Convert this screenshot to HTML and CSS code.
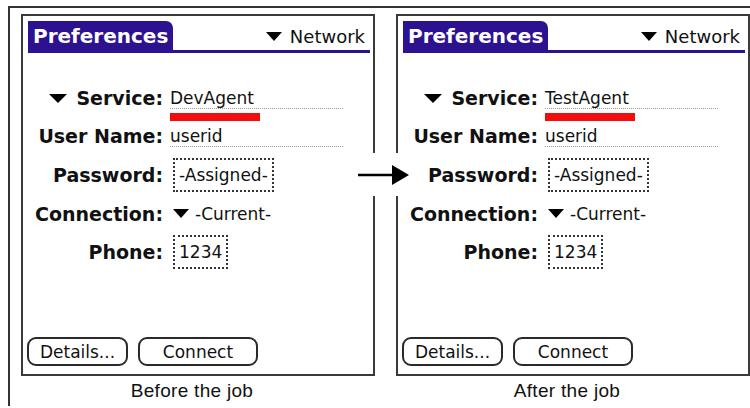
FILE: index.html
```html
<!DOCTYPE html>
<html lang="en">
<head>
    <meta charset="UTF-8">
    <title>Network preferences</title>
    <link rel="stylesheet" href="styles.css">
</head>
<body>
<div class="frame">
    <!--before-->
    <div class="shot">
        <div class="screen">
            <div class="titleBar">
                <span class="tab">Preferences</span>
                <span class="pick"><i class="tri"></i>Network</span>
            </div>
            <div class="form">
                <label><i class="tri"></i>Service:</label>
                <span class="field">DevAgent<b class="mark"></b></span>
                <label>User Name:</label>
                <span class="field">userid</span>
                <label>Password:</label>
                <span class="box">-Assigned-</span>
                <label>Connection:</label>
                <span class="pick"><i class="tri"></i>-Current-</span>
                <label>Phone:</label>
                <span class="box">1234</span>
            </div>
            <div class="buttons">
                <button class="btn">Details...</button>
                <button class="btn wide">Connect</button>
            </div>
        </div>
        <p class="caption">Before the job</p>
    </div>
    <!--after-->
    <div class="shot">
        <div class="screen">
            <div class="titleBar">
                <span class="tab">Preferences</span>
                <span class="pick"><i class="tri"></i>Network</span>
            </div>
            <div class="form">
                <label><i class="tri"></i>Service:</label>
                <span class="field">TestAgent<b class="mark"></b></span>
                <label>User Name:</label>
                <span class="field">userid</span>
                <label>Password:</label>
                <span class="box">-Assigned-</span>
                <label>Connection:</label>
                <span class="pick"><i class="tri"></i>-Current-</span>
                <label>Phone:</label>
                <span class="box">1234</span>
            </div>
            <div class="buttons">
                <button class="btn">Details...</button>
                <button class="btn wide">Connect</button>
            </div>
        </div>
        <p class="caption">After the job</p>
    </div>
</div>
<!--arrow between the two screens-->
<div class="arrow">
    <svg width="56" height="44" viewBox="0 0 56 44">
        <rect x="9" y="0" width="38" height="43" fill="#fff"/>
        <line x1="2" y1="22" x2="37" y2="22" stroke="#000" stroke-width="2.5"/>
        <polygon points="36,12 53,22 36,32" fill="#000"/>
    </svg>
</div>
</body>
</html>
```

FILE: styles.css
```css
*{
    margin: 0;
    padding: 0;
}
body{
    background: #fff;
    font-family: "DejaVu Sans", sans-serif;
    color: #111;
}
/*outer frame, only top and left edges visible*/
.frame{
    margin: 6px 0 0 8px;
    border-top: 2px solid #333;
    border-left: 2px solid #333;
    padding: 6px 0 0 11px;
    display: flex;
    gap: 21px;
    height: 400px;
    box-sizing: border-box;
}
.shot{
    width: 354px;
}
.screen{
    height: 362px;
    box-sizing: border-box;
    border: 2px solid #3a3a3a;
    padding: 5px 3px 8px 5px;
    display: flex;
    flex-direction: column;
}
/*title bar*/
.titleBar{
    display: flex;
    align-items: flex-end;
    justify-content: space-between;
    border-bottom: 3px solid #2c1290;
    height: 29px;
}
.tab{
    background: #2c1290;
    color: #fff;
    font-weight: 700;
    font-size: 20px;
    line-height: 30px;
    height: 29px;
    padding: 0 5px 0 5px;
    border-top-right-radius: 7px;
}
.titleBar .pick{
    font-size: 18px;
    line-height: 26px;
    padding-right: 5px;
}
.tri{
    display: inline-block;
    width: 0;
    height: 0;
    border-left: 8px solid transparent;
    border-right: 8px solid transparent;
    border-top: 9px solid #000;
    margin-right: 8px;
    vertical-align: 2px;
}
/*form*/
.form{
    margin-top: 26px;
    display: grid;
    grid-template-columns: 135px 180px;
    grid-template-rows: 38px 38px 40px 38px 38px;
    column-gap: 7px;
    align-items: center;
}
.form label{
    text-align: right;
    font-weight: 700;
    font-size: 19px;
    white-space: nowrap;
}
.form label .tri{
    margin-right: 9px;
    border-left-width: 9px;
    border-right-width: 9px;
}
.field{
    position: relative;
    width: 173px;
    font-size: 17px;
    line-height: 19px;
    border-bottom: 1px dotted #999;
    margin-top: 2px;
}
.mark{
    position: absolute;
    left: 0;
    top: 24px;
    width: 90px;
    height: 8px;
    background: #f20d0d;
}
.box{
    justify-self: start;
    margin-left: 3px;
    height: 34px;
    box-sizing: border-box;
    border: 2px dotted #333;
    padding: 0 4px;
    font-size: 17px;
    line-height: 30px;
}
.form .pick{
    margin-left: 3px;
    font-size: 17px;
}
.form .pick .tri{
    margin-right: 6px;
}
/*buttons*/
.buttons{
    margin-top: auto;
    margin-left: -1px;
    display: flex;
    gap: 10px;
}
.btn{
    width: 101px;
    height: 29px;
    border: 2px solid #2a2a2a;
    border-radius: 9px;
    background: #fff;
    font-family: "DejaVu Sans", sans-serif;
    font-size: 17px;
    color: #111;
}
.wide{
    width: 120px;
}
.caption{
    font-family: "Liberation Sans", Arial, sans-serif;
    font-size: 19px;
    letter-spacing: 0.3px;
    text-align: center;
    padding-right: 12px;
    margin-top: 4px;
    color: #111;
}
.arrow{
    position: absolute;
    left: 356px;
    top: 153px;
}
```
